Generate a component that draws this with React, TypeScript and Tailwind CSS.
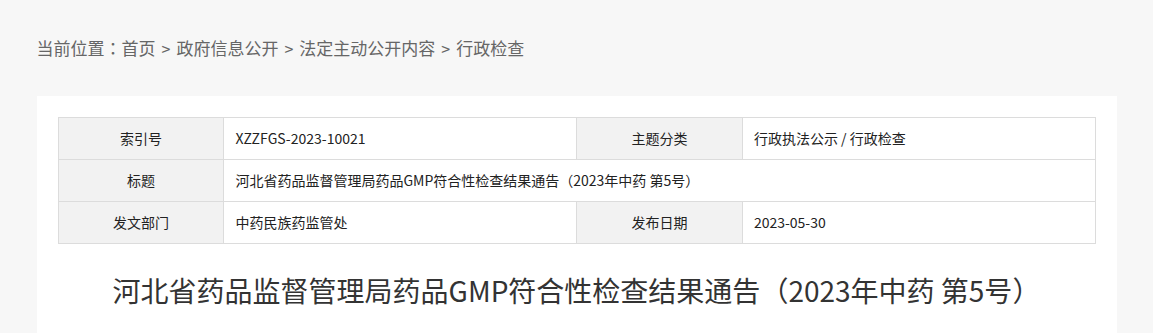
import React from 'react';

const font = { fontFamily: '"Noto Sans CJK SC", "Noto Sans", sans-serif' };

export default function App() {
  const crumbs = ['首页', '政府信息公开', '法定主动公开内容', '行政检查'];

  return (
    <div className="min-h-screen bg-[#f7f7f7]" style={font}>
      <div className="w-[1080px] mx-auto">
        {/* Breadcrumb */}
        <div className="h-[96px] flex items-center text-[17px] text-[#666] pb-[1px]">
          <span>当前位置</span>
          <span className="font-['Noto_Sans_CJK_TC']">：</span>
          {crumbs.map((c, i) => (
            <React.Fragment key={c}>
              {i > 0 && <span className="px-[6px] text-[16px]">&gt;</span>}
              <span>{c}</span>
            </React.Fragment>
          ))}
        </div>

        {/* Content panel */}
        <div className="bg-white px-[21px] pt-[21px] pb-10">
          <table className="w-full border-collapse text-[14px] text-[#222] table-fixed">
            <colgroup>
              <col className="w-[16%]" />
              <col className="w-[34%]" />
              <col className="w-[16%]" />
              <col className="w-[34%]" />
            </colgroup>
            <tbody>
              <tr className="h-[42px]">
                <td className="border border-[#dcdcdc] bg-[#f2f2f2] text-center">索引号</td>
                <td className="border border-[#dcdcdc] px-[11px]">XZZFGS-2023-10021</td>
                <td className="border border-[#dcdcdc] bg-[#f2f2f2] text-center">主题分类</td>
                <td className="border border-[#dcdcdc] px-[11px]">行政执法公示 / 行政检查</td>
              </tr>
              <tr className="h-[42px]">
                <td className="border border-[#dcdcdc] bg-[#f2f2f2] text-center">标题</td>
                <td className="border border-[#dcdcdc] px-[11px]" colSpan={3}>
                  河北省药品监督管理局药品GMP符合性检查结果通告<span className="font-['Noto_Sans_CJK_TC']">（</span>2023年中药 第5号<span className="font-['Noto_Sans_CJK_TC']">）</span>
                </td>
              </tr>
              <tr className="h-[42px]">
                <td className="border border-[#dcdcdc] bg-[#f2f2f2] text-center">发文部门</td>
                <td className="border border-[#dcdcdc] px-[11px]">中药民族药监管处</td>
                <td className="border border-[#dcdcdc] bg-[#f2f2f2] text-center">发布日期</td>
                <td className="border border-[#dcdcdc] px-[11px]">2023-05-30</td>
              </tr>
            </tbody>
          </table>

          <h1 className="mt-[26px] text-center text-[28px] leading-[40px] text-[#333]">
            河北省药品监督管理局药品GMP符合性检查结果通告<span className="font-['Noto_Sans_CJK_TC']">（</span>2023年中药 第5号<span className="font-['Noto_Sans_CJK_TC']">）</span>
          </h1>
        </div>
      </div>
    </div>
  );
}
